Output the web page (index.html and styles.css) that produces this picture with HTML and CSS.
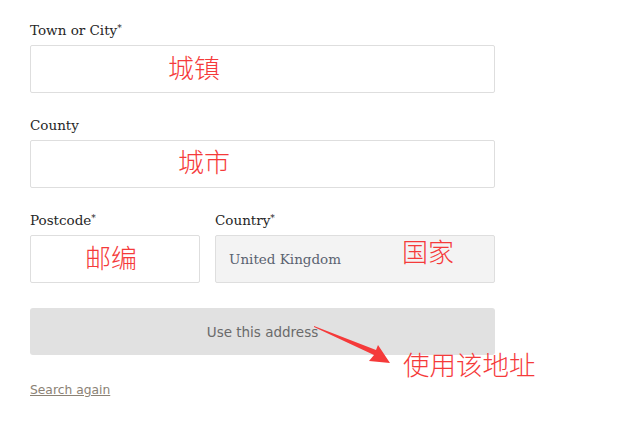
FILE: index.html
```html
<!DOCTYPE html>
<html lang="en">
<head>
    <meta charset="UTF-8">
    <meta name="viewport" content="width=device-width, initial-scale=1.0">
    <title>Address</title>
    <link rel="stylesheet" href="styles.css">
</head>
<body>
    <form class="address-form">
        <div class="field">
            <label>Town or City<sup>*</sup></label>
            <div class="box">
                <span class="note note-town">城镇</span>
            </div>
        </div>

        <div class="field">
            <label>County</label>
            <div class="box">
                <span class="note note-county">城市</span>
            </div>
        </div>

        <div class="row">
            <div class="field">
                <label>Postcode<sup>*</sup></label>
                <div class="box">
                    <span class="note note-post">邮编</span>
                </div>
            </div>
            <div class="field">
                <label>Country<sup>*</sup></label>
                <div class="box box-disabled">
                    <span class="value">United Kingdom</span>
                    <span class="note note-country">国家</span>
                </div>
            </div>
        </div>

        <div class="submit">
            <button type="button">Use this address</button>
            <svg class="arrow" width="100" height="60" viewBox="0 0 100 60">
                <polygon points="0,0 62,24 64,19 76,37 55,35 60,29 0,1" fill="#f53a3a"/>
            </svg>
            <span class="note note-use">使用该地址</span>
        </div>

        <a class="search" href="#">Search again</a>
    </form>
</body>
</html>
```

FILE: styles.css
```css
/* Global Styles */
body {
    margin: 0;
    padding: 20px 0 0 30px;
    background: #fff;
    font-family: "DejaVu Serif", Georgia, serif;
    color: #333;
}

.address-form {
    width: 465px;
}

/* Fields */
.field {
    margin-bottom: 22px;
}

.field label {
    display: block;
    font-size: 13.5px;
    line-height: 20px;
    margin-bottom: 5px;
    color: #262626;
}

.field label sup {
    font-size: 9px;
    line-height: 0;
    vertical-align: 4px;
}

.box {
    position: relative;
    height: 46px;
    border: 1px solid #dedede;
    border-radius: 2px;
    background: #fff;
    display: flex;
    align-items: center;
}

.box-disabled {
    background: #f3f3f3;
}

.box .value {
    padding-left: 13px;
    font-size: 13.5px;
    color: #5a6270;
}

.row {
    display: grid;
    grid-template-columns: 170px 1fr;
    gap: 15px;
}

/* Annotations */
.note {
    position: absolute;
    font-family: "Noto Sans CJK SC", sans-serif;
    font-weight: 300;
    font-size: 26px;
    line-height: 1;
    white-space: nowrap;
    color: #f53a3a;
}

.note-town { left: 137px; top: 8px; }
.note-county { left: 147px; top: 7px; }
.note-post { left: 54px; top: 8px; }
.note-country { left: 186px; top: 2px; }

/* Submit */
.submit {
    position: relative;
    margin-top: 3px;
}

.submit button {
    display: block;
    width: 100%;
    height: 47px;
    border: none;
    border-radius: 3px;
    background: #e1e1e1;
    color: #6a6a6a;
    font-family: "DejaVu Sans", sans-serif;
    font-size: 13.5px;
    cursor: pointer;
}

.arrow {
    position: absolute;
    left: 284px;
    top: 18px;
}

.note-use {
    left: 373px;
    top: 43px;
    font-size: 26.5px;
}

.search {
    display: inline-block;
    margin-top: 28px;
    font-family: "DejaVu Sans", sans-serif;
    font-size: 12.3px;
    color: #8b8275;
}
```
